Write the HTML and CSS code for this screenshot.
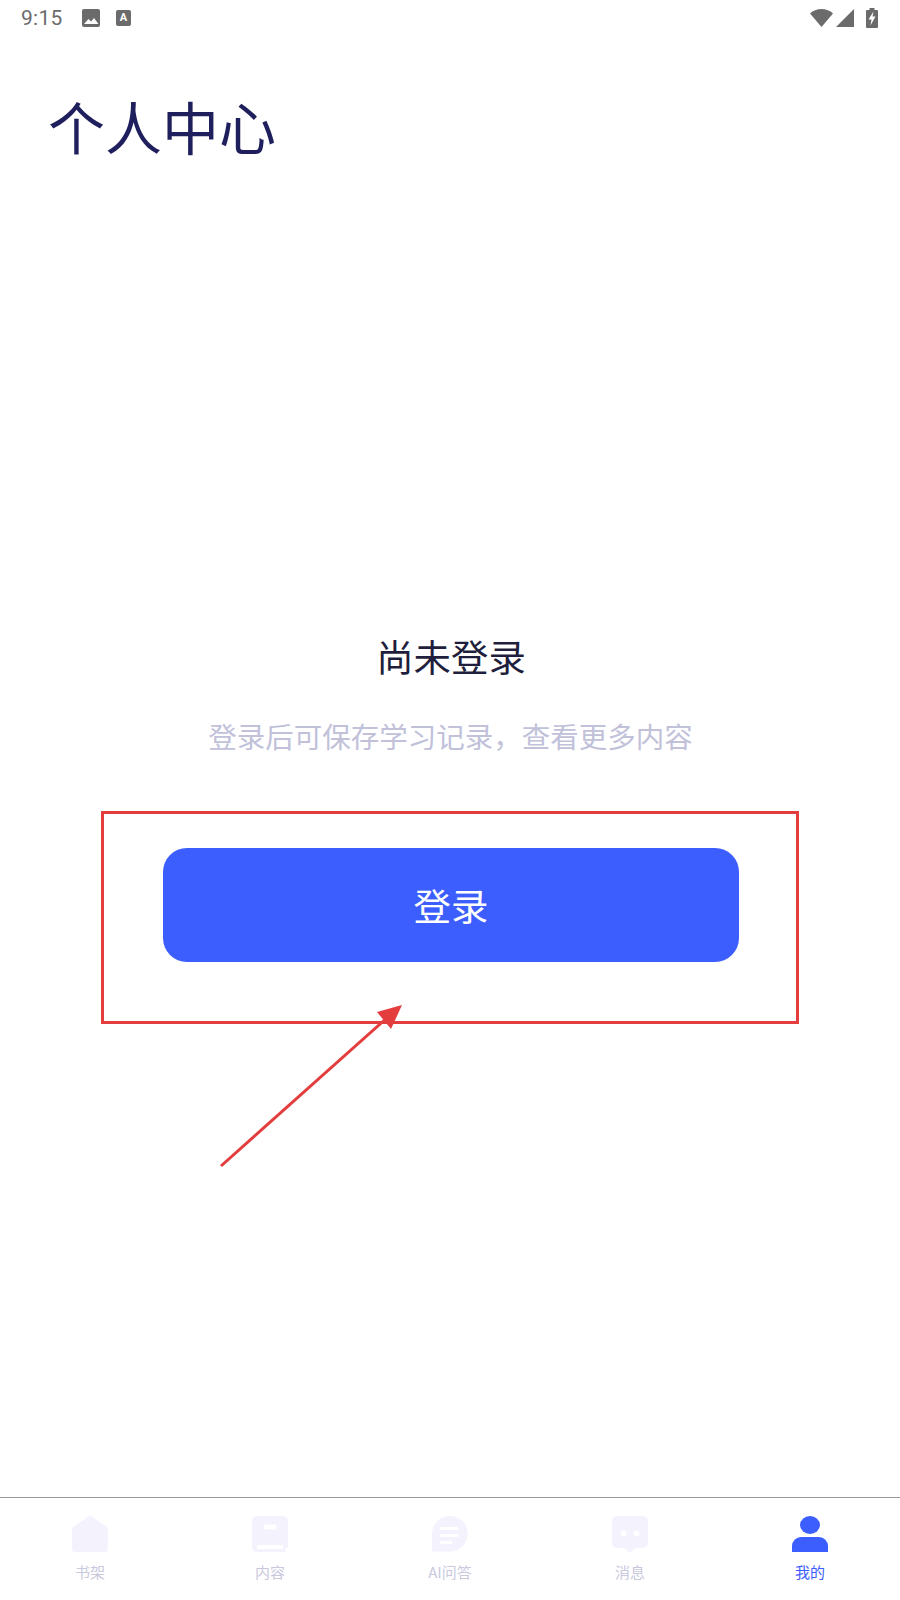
FILE: index.html
```html
<!DOCTYPE html>
<html lang="zh-CN">
<head>
<meta charset="utf-8">
<title>个人中心</title>
<link rel="stylesheet" href="styles.css">
</head>
<body>
<div class="app">
  <div class="statusbar">
    <span class="time">9:15</span>
    <svg class="st-img" viewBox="0 0 18 18"><rect width="18" height="18" rx="2" fill="#6b6b6b"/><path d="M2 15l4.500-5 2.500 2.500 3-3.500 4.500 6z" fill="#fff"/></svg>
    <span class="st-a">A</span>
    <span class="st-spacer"></span>
    <svg class="st-wifi" viewBox="0 0 23 18"><path d="M0 4.500C3 1.700 7 0 11.500 0S20 1.700 23 4.500L11.500 18z" fill="#6b6b6b"/></svg>
    <svg class="st-signal" viewBox="0 0 18 18"><path d="M18 0v18H0z" fill="#6b6b6b"/></svg>
    <svg class="st-batt" viewBox="0 0 12 20"><path d="M3.500 0h5v2H11a1 1 0 0 1 1 1v16a1 1 0 0 1-1 1H1a1 1 0 0 1-1-1V3a1 1 0 0 1 1-1h2.500z" fill="#6b6b6b"/><path d="M7.500 3.500L2.500 11.500h3L4.500 17.500 9.500 8.500H6.500z" fill="#fff"/></svg>
  </div>
  <h1 class="title">个人中心</h1>
  <main class="main">
    <h2 class="heading">尚未登录</h2>
    <p class="sub">登录后可保存学习记录，查看更多内容</p>
    <button class="login">登录</button>
  </main>
  <nav class="tabbar">
    <div class="tab">
      <svg class="tab-icon" viewBox="0 0 36 36"><path d="M16 .8a3.500 3.500 0 0 1 4 0l14.500 10a3.500 3.500 0 0 1 1.500 2.900V33a3 3 0 0 1-3 3H3a3 3 0 0 1-3-3V13.700a3.500 3.500 0 0 1 1.500-2.900z"/></svg>
      <span class="tab-label">书架</span>
    </div>
    <div class="tab">
      <svg class="tab-icon" viewBox="0 0 36 36"><path fill-rule="evenodd" d="M5 0h26a5 5 0 0 1 5 5v26.500a3 3 0 0 0-3 2.500 3 3 0 0 0 3 2H5a5 5 0 0 1-5-5V5a5 5 0 0 1 5-5zM12 9.500v3a1 1 0 0 0 1 1h10.500a1 1 0 0 0 1-1v-3a1 1 0 0 0-1-1H13a1 1 0 0 0-1 1zM5 30v2a1 1 0 0 0 1 1h24a1 1 0 0 0 1-1v-2a1 1 0 0 0-1-1H6a1 1 0 0 0-1 1z"/></svg>
      <span class="tab-label">内容</span>
    </div>
    <div class="tab">
      <svg class="tab-icon" viewBox="0 0 36 36"><path fill-rule="evenodd" d="M18 0a17.500 17.500 0 0 1 0 35.500H0V18A18 18 0 0 1 18 0zM9 11a1.500 1.500 0 0 0 0 3h16a1.500 1.500 0 0 0 0-3zM9 18a1.500 1.500 0 0 0 0 3h16a1.500 1.500 0 0 0 0-3zM9 25a1.500 1.500 0 0 0 0 3h10a1.500 1.500 0 0 0 0-3z"/></svg>
      <span class="tab-label">AI问答</span>
    </div>
    <div class="tab">
      <svg class="tab-icon" viewBox="0 0 36 36"><path fill-rule="evenodd" d="M5 0h26a5 5 0 0 1 5 5v22a5 5 0 0 1-5 5h-7.500l-4 3.500a2.500 2.500 0 0 1-3 0l-4-3.500H5a5 5 0 0 1-5-5V5a5 5 0 0 1 5-5zM11.500 14.500a3 3 0 1 0 0 6 3 3 0 0 0 0-6zM24.500 14.500a3 3 0 1 0 0 6 3 3 0 0 0 0-6z"/></svg>
      <span class="tab-label">消息</span>
    </div>
    <div class="tab tab-active">
      <svg class="tab-icon" viewBox="0 0 36 36"><ellipse cx="18" cy="9" rx="10" ry="9"/><path d="M0 36v-6a9 9 0 0 1 9-9h18a9 9 0 0 1 9 9v6z"/></svg>
      <span class="tab-label">我的</span>
    </div>
  </nav>
  <div class="mark-box"></div>
  <svg class="mark-arrow" viewBox="0 0 900 1600">
    <line x1="221" y1="1166" x2="388" y2="1017"/>
    <polygon points="402,1005 377,1012 391,1029"/>
  </svg>
</div>
</body>
</html>
```
FILE: styles.css
```css
* { box-sizing: border-box; }
html, body { margin: 0; padding: 0; background: #fff; }
.app {
  position: relative;
  width: 900px;
  height: 1600px;
  display: flex;
  flex-direction: column;
  overflow: hidden;
  font-family: "Noto Sans CJK SC", "Noto Sans", sans-serif;
}
.statusbar {
  height: 36px;
  display: flex;
  align-items: center;
  padding: 0 22px 0 21px;
  flex: none;
}
.time {
  font-family: Roboto, sans-serif;
  font-size: 21px;
  letter-spacing: .3px;
  color: #6b6b6b;
  width: 61px;
}
.st-img { width: 18px; height: 18px; margin-right: 16px; }
.st-a {
  width: 15px;
  height: 16px;
  background: #6b6b6b;
  color: #fff;
  border-radius: 2px;
  font: 700 11px/15px Roboto, sans-serif;
  text-align: center;
}
.st-spacer { flex: 1; }
.st-wifi { width: 23px; height: 18px; margin-right: 3px; }
.st-signal { width: 18px; height: 18px; margin-right: 12px; }
.st-batt { width: 12px; height: 20px; }
.title {
  margin: 43px 0 0 48px;
  font-size: 57px;
  line-height: 92px;
  font-weight: 400;
  color: #1f1f5e;
  flex: none;
}
.main {
  flex: 1;
  display: flex;
  flex-direction: column;
  align-items: center;
  padding-top: 458px;
}
.heading {
  margin: 0 0 0 2px;
  font-size: 37.4px;
  line-height: 54px;
  font-weight: 400;
  color: #1f1f3d;
}
.sub {
  margin: 32px 0 0 1px;
  font-size: 28.5px;
  line-height: 42px;
  color: #c1c1da;
}
.login {
  margin: 91px 0 0 2px;
  width: 576px;
  height: 114px;
  border: 0;
  border-radius: 24px;
  background: #3d5eff;
  color: #fff;
  font: 400 37.4px/54px "Noto Sans CJK SC", sans-serif;
}
.tabbar {
  flex: none;
  height: 103px;
  border-top: 1px solid #999;
  display: grid;
  grid-template-columns: repeat(5, 180px);
}
.tab {
  display: flex;
  flex-direction: column;
  align-items: center;
  padding-top: 18px;
}
.tab-icon { width: 36px; height: 36px; fill: #f4f2fd; }
.tab-label {
  margin-top: 8px;
  font-size: 15px;
  line-height: 24px;
  color: #c9c9de;
}
.tab-active .tab-icon { fill: #3d5eff; }
.tab-active .tab-label { color: #3d5eff; }
.mark-box {
  position: absolute;
  left: 101px;
  top: 811px;
  width: 698px;
  height: 213px;
  border: 3px solid #e33d3d;
}
.mark-arrow {
  position: absolute;
  left: 0;
  top: 0;
  width: 900px;
  height: 1600px;
  pointer-events: none;
}
.mark-arrow line { stroke: #e33d3d; stroke-width: 3; }
.mark-arrow polygon { fill: #e33d3d; }
```
